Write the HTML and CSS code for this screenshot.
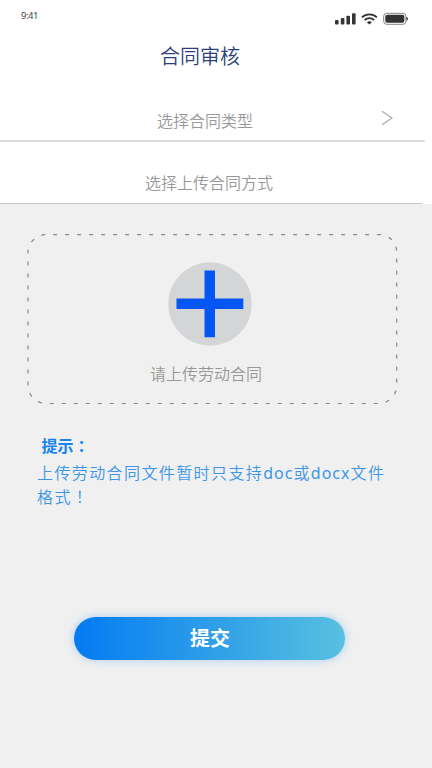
FILE: index.html
```html
<!DOCTYPE html>
<html lang="zh-CN">
<head>
<meta charset="utf-8">
<title>合同审核</title>
<link rel="stylesheet" href="styles.css">
</head>
<body>
<header class="status">
  <span class="time">9:41</span>
  <svg class="status-icons" width="74" height="14" viewBox="0 0 74 14">
    <g fill="#333">
      <rect x="0" y="8" width="3.6" height="4.6" rx="1"/>
      <rect x="5.8" y="6" width="3.6" height="6.6" rx="1"/>
      <rect x="11.4" y="3.8" width="3.6" height="8.8" rx="1"/>
      <rect x="17" y="1.2" width="3.6" height="11.4" rx="1"/>
      <path d="M31.900 10.300a4 4 0 0 1 5 0L34.400 12.500z"/>
      <rect x="50.300" y="2.800" width="19" height="8" rx="1.800"/>
      <path d="M71.300 4.800q1.700.6 1.700 2t-1.700 2z"/>
    </g>
    <g fill="none" stroke="#333" stroke-width="1.700">
      <path d="M26.900 5.300a11 11 0 0 1 15 0"/>
      <path d="M29.500 8.100a7.200 7.200 0 0 1 9.800 0"/>
    </g>
    <rect x="48.700" y="1.300" width="22.200" height="11" rx="3" fill="none" stroke="#777" stroke-width=".9"/>
  </svg>
</header>
<h1 class="title">合同审核</h1>
<section class="fields">
  <div class="field field-type"><span>选择合同类型</span>
    <svg class="chevron" width="12" height="16" viewBox="0 0 12 16"><path d="M1 1.200L11 8 1 14.800" fill="none" stroke="#aaa" stroke-width="1.200"/></svg>
  </div>
  <div class="field field-method"><span>选择上传合同方式</span></div>
</section>
<main class="content">
  <div class="upload">
    <svg class="outline" width="371" height="171" viewBox="0 0 371 171"><path d="M1 151.500V19A18 18 0 0 1 19 .7H352A17 17 0 0 1 369.700 18V152A18 18 0 0 1 352 169.500H19A18 18 0 0 1 1 151.500" fill="none" stroke="#888" stroke-width="1.200" stroke-dasharray="4 8"/></svg>
    <svg class="plus" width="84" height="84" viewBox="0 0 84 84"><circle cx="42" cy="42" r="41.800" fill="#d4d5d7"/><path d="M36.500 8.500h10.500v28h28.300v10.500H47v28.300H36.500V47H8.500V36.500h28z" fill="#0556f3"/></svg>
    <p class="upload-label">请上传劳动合同</p>
  </div>
  <h2 class="tip-title">提示<span lang="zh-TW" class="mark">：</span></h2>
  <p class="tip">上传劳动合同文件暂时只支持<span class="latin">doc</span>或<span class="latin">docx</span>文件<br>格式<span lang="zh-TW" class="mark">！</span></p>
  <button class="submit">提交</button>
</main>
</body>
</html>
```
FILE: styles.css
```css
* { box-sizing: border-box; margin: 0; padding: 0; }
body {
  width: 432px; height: 768px; overflow: hidden;
  display: flex; flex-direction: column;
  background: #fff; color: #989898;
  font-family: "Noto Sans CJK SC", sans-serif;
  font-weight: 350;
}
.status { height: 32px; display: flex; justify-content: space-between; padding: 9px 23px 0 21px; }
.time { font: 400 9.500px/14px "Noto Sans", sans-serif; color: #444; letter-spacing: -.5px; }
.status-icons { margin-top: 3px; }
.title { height: 48px; padding-left: 160px; font-size: 20px; line-height: 48px; font-weight: 350; color: #2b3f7a; }
.fields { height: 124px; }
.field { display: flex; align-items: center; font-size: 16px; line-height: 24px; border-bottom: 1px solid #c8c8c8; }
.field-type { width: 425px; height: 61px; padding: 20px 32px 0 157px; justify-content: space-between; border-bottom: 2px solid #dedede; height: 62px; }
.chevron { margin-top: -5px; }
.field-method { width: 422px; height: 62px; padding: 19px 0 0 145px; }
.content { flex: 1; background: #f0f0f0; display: flex; flex-direction: column; padding: 30px 27px 0; }
.upload { position: relative; width: 371px; height: 171px; padding-top: 28px; }
.outline { position: absolute; left: 0; top: 0; }
.plus { display: block; margin-left: 140.500px; }
.upload-label { margin: 15px 0 0 123px; font-size: 16px; line-height: 24px; }
.tip-title { height: 24px; margin: 28px 0 0 14.500px; font-size: 16px; line-height: 24px; font-weight: 700; color: #1684f0; }
.tip { width: 365px; height: 48px; margin: 3px 0 0 10px; font-size: 16px; line-height: 24px; letter-spacing: 1.400px; color: #3c96e8; }
.latin { font-family: "Noto Sans", sans-serif; font-weight: 400; line-height: 1; letter-spacing: 1px; }
.mark { font-family: "Noto Sans CJK TC", sans-serif; line-height: 1; }
.submit {
  width: 271px; height: 43px; margin: 109px 0 0 47px; padding: 0 0 1px 1px; border: 0; border-radius: 22px;
  background: linear-gradient(90deg, #037bf2, #58c1df);
  box-shadow: 0 0 8px rgba(40, 140, 245, .35);
  color: #fff; font: 700 20px/42px "Noto Sans CJK SC", sans-serif;
}
```
